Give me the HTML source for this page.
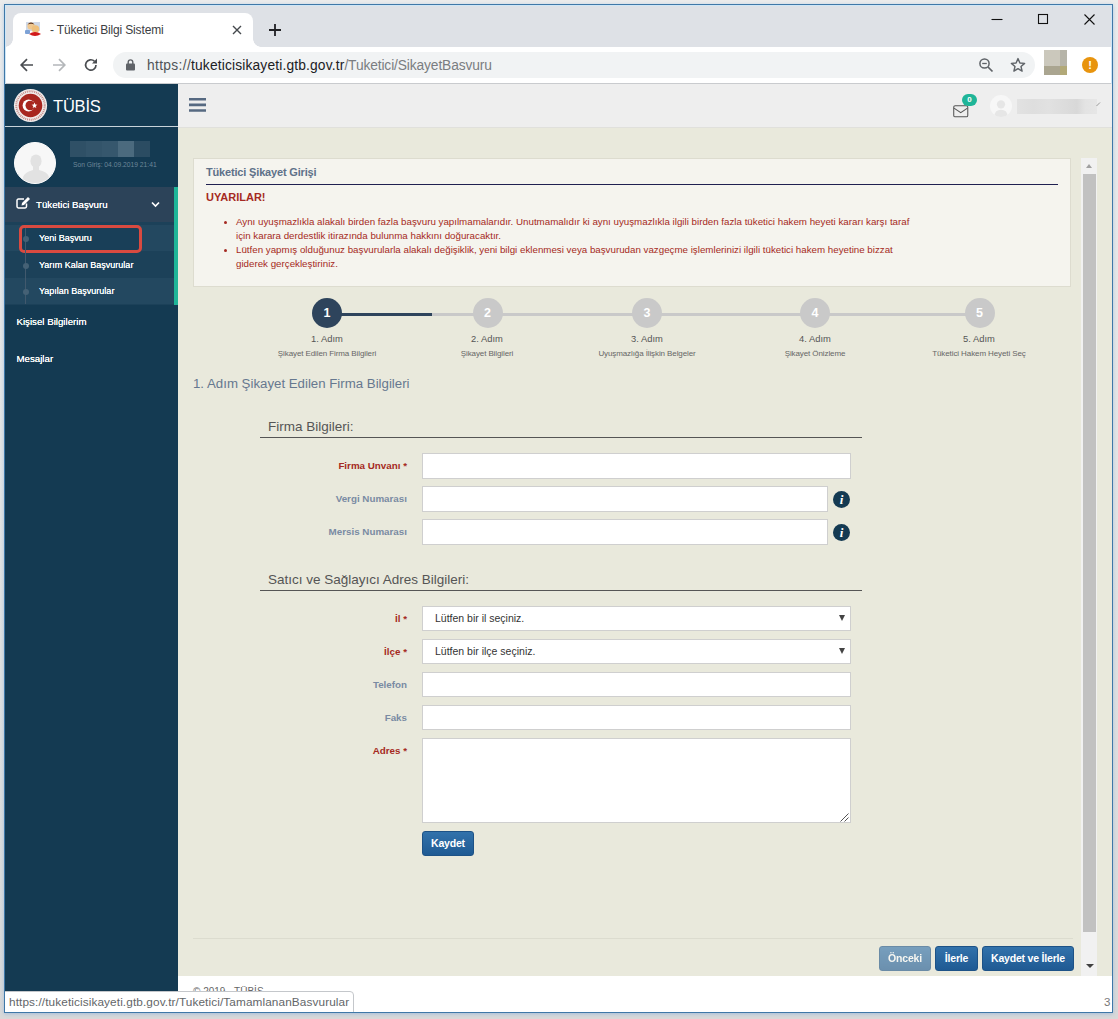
<!DOCTYPE html>
<html lang="tr"><head><meta charset="utf-8"><title>Tüketici Bilgi Sistemi</title>
<style>
*{box-sizing:border-box;margin:0;padding:0}
html,body{width:1118px;height:1019px;overflow:hidden}
body{font-family:"Liberation Sans",sans-serif;background:linear-gradient(#ececec,#e4e4e4 50%,#d9d9d9);position:relative}
.abs{position:absolute}
#win{left:4px;top:4px;width:1109px;height:1009px;border:1px solid #3f78a8;background:#fff;overflow:hidden;box-shadow:0 1px 4px 0 rgba(120,165,215,.55)}
/* all children positioned relative to page => offset -5 */
#in{left:-5px;top:-5px;width:1118px;height:1019px}
#tabstrip{left:5px;top:5px;width:1107px;height:42px;background:#dee1e6}
#tab{left:13px;top:13px;width:240px;height:34px;background:#fff;border-radius:8px 8px 0 0}
#tabtitle{left:50px;top:23px;font-size:12px;color:#3c4043;letter-spacing:-.15px}
#toolbar{left:5px;top:47px;width:1107px;height:37px;background:#fff;border-bottom:1px solid #c9cbce}
#omni{left:113px;top:52px;width:922px;height:26px;border-radius:13px;background:#f1f3f4}
#url{left:147px;top:58px;font-size:13.8px;color:#202124;letter-spacing:.15px}
#url span{color:#7a7d81;letter-spacing:-.13px}#url span.h{color:#505357;letter-spacing:.33px}
#side{left:5px;top:84px;width:173px;height:928px;background:#143a52}
#apphead{left:178px;top:84px;width:934px;height:44px;background:#eeeeee;border-bottom:1px solid #e0e0dc}
#content{left:178px;top:128px;width:934px;height:848px;background:#e9e9dc}
#footer{left:178px;top:976px;width:934px;height:36px;background:#fff}

.ic{position:absolute;overflow:visible}
#tubis{left:53px;top:97px;font-size:16.5px;color:#fff;letter-spacing:-.2px}
#sideline{left:5px;top:126px;width:173px;height:1px;background:#c8d3da}
#avatar{left:14px;top:142px;width:42px;height:42px;border-radius:50%;background:#f7f7f7;overflow:hidden;border:1px solid #fff}
#blurname{left:70px;top:141px;width:80px;height:16px;background:linear-gradient(90deg,#2f5066 0 20%,#33546a 20% 40%,#36576d 40% 60%,#4b6a7e 60% 80%,#2b4c62 80%);filter:blur(.5px)}
#songiris{left:73px;top:161px;font-size:6.73px;color:#6c8799;white-space:nowrap}
#mTop{left:5px;top:187px;width:173px;height:35px;background:#2c4359}
#mGreen{left:174px;top:187px;width:4px;height:118px;background:#1fb598}
#mSub{left:5px;top:222px;width:169px;height:83px;background:#1c4159}
.subrow{left:5px;width:169px;height:26px;background:#234860}
#mTopTxt{left:36px;top:199px;font-size:9.7px;color:#fff;font-weight:normal;text-shadow:0 0 .4px #fff}
.sub{font-size:9px;color:#fff;left:39px;white-space:nowrap;text-shadow:0 0 .3px #fff}
.mi{font-size:9.7px;color:#fff;left:16.5px;white-space:nowrap;text-shadow:0 0 .3px #fff}
#vline{left:25px;top:228px;width:1px;height:76px;background:#41596d}
.dot{width:6px;height:6px;border-radius:50%;background:#456175;left:22.5px}
#redbox{left:18.5px;top:224.5px;width:123px;height:28px;border:3px solid #d94a40;border-radius:5px;background:#193f58}

#panel{left:193px;top:158px;width:878px;height:129px;background:#f5f4ee;border:1px solid #dddccf}
#ptitle{left:206px;top:166px;font-size:11px;font-weight:bold;color:#5e7189;letter-spacing:-.17px}
#pline{left:206px;top:184px;width:852px;height:1px;background:#1f2050}
#uyari{left:206px;top:191px;font-size:11px;font-weight:bold;color:#a52a22}
.wl{font-size:9.76px;color:#a52a22;left:236px;white-space:nowrap}
.bul{width:3px;height:3px;border-radius:50%;background:#a52a22;left:224px}
#sbar{left:1081px;top:158px;width:16px;height:818px;background:#f1f1f1}
#sthumb{left:1083px;top:174px;width:13px;height:758px;background:#c1c1c1}
.stepline{height:3px;top:313px;background:#c9c9c9}
.sc{width:30px;height:30px;border-radius:50%;background:#c9c9c9;color:#fff;font-weight:bold;font-size:12.5px;text-align:center;line-height:30px;top:298px}
.st1{font-size:9.4px;color:#555;text-align:center;width:120px;top:333px}
.st2{font-size:8px;color:#666;text-align:center;width:140px;top:348.5px;letter-spacing:-.1px}
#h1{left:193px;top:376px;font-size:13.25px;color:#66788f}
.sec{font-size:13.5px;color:#555;left:268px}
.secline{left:260px;width:602px;height:1px;background:#555}
.lbl{font-size:9.8px;font-weight:bold;color:#7a8ba3;text-align:right;width:149px;left:258px;margin-top:-1px;white-space:nowrap}
.lbl.req{color:#a52a22}
.inp{left:422px;width:429px;height:26px;background:#fff;border:1px solid #cfcfcf}
.selt{font-size:10.5px;color:#333;left:435px}
.arr{width:0;height:0;border-left:3.5px solid transparent;border-right:3.5px solid transparent;border-top:6px solid #444;left:839px}
.info{width:17px;height:17px;border-radius:50%;background:#143a52;left:833px;color:#fff;font-family:"Liberation Serif",serif;font-style:italic;font-weight:bold;font-size:13px;text-align:center;line-height:17px}
.btn{height:25px;border-radius:3px;background:linear-gradient(#3272ab,#1f5a93);border:1px solid #1d5286;color:#fff;font-weight:bold;font-size:10.5px;text-align:center;line-height:23px;white-space:nowrap;letter-spacing:-.2px}
#hr{left:193px;top:938px;width:880px;height:1px;background:#dcdccf}
#foottxt{left:193px;top:986px;font-size:10px;color:#666}
#status{left:4px;top:991px;width:350px;height:22px;background:#fff;border:1px solid #c4c7cb;border-radius:0 4px 0 0;font-size:11.8px;color:#636669;line-height:20px;padding-left:4px;white-space:nowrap;letter-spacing:.1px}
#three{left:1104px;top:996px;font-size:11.5px;color:#777}

#tab:before,#tab:after{content:"";position:absolute;bottom:0;width:8px;height:8px}
#tab:before{left:-8px;background:radial-gradient(circle at 0 0,rgba(255,255,255,0) 7.5px,#fff 8px)}
#tab:after{right:-8px;background:radial-gradient(circle at 100% 0,rgba(255,255,255,0) 7.5px,#fff 8px)}
#glow{left:5px;top:5px;width:1107px;height:79px;border:1px solid #cfe6f6;border-bottom:0;pointer-events:none}
</style></head><body>
<div id="win" class="abs"><div id="in" class="abs">
<div id="tabstrip" class="abs"></div>
<div id="tab" class="abs"></div>
<div id="tabtitle" class="abs">- Tüketici Bilgi Sistemi</div>
<div id="toolbar" class="abs"></div>
<div id="omni" class="abs"></div>
<div id="url" class="abs"><span class="h">https://</span>tuketicisikayeti.gtb.gov.tr<span>/Tuketici/SikayetBasvuru</span></div>
<div id="side" class="abs"></div>
<div id="apphead" class="abs"></div>
<div id="content" class="abs"></div>
<div id="footer" class="abs"></div>

<!-- chrome tab bar icons -->
<svg class="ic" style="left:25px;top:21px" width="17" height="17" viewBox="0 0 17 17"><rect x="1" y="1" width="14" height="9" fill="#cfd8e6"/><circle cx="6" cy="5" r="3.6" fill="#f0c890"/><path d="M2.5 3.5Q6 -0.5 9.5 3.5Q6 2 2.5 3.5Z" fill="#5a3420"/><circle cx="10.5" cy="8" r="3.8" fill="#eec07c"/><path d="M4 13Q10 9 16 13Q10 17 4 13Z" fill="#d11a1a"/><rect x="0" y="9" width="5" height="4" rx="1" fill="#7da2d6"/></svg>
<svg class="ic" style="left:232px;top:25px" width="10" height="10" viewBox="0 0 10 10"><path d="M1 1L9 9M9 1L1 9" stroke="#45494d" stroke-width="1.4" fill="none"/></svg>
<svg class="ic" style="left:269px;top:24px" width="12" height="12" viewBox="0 0 12 12"><path d="M6 0V12M0 6H12" stroke="#202124" stroke-width="1.8" fill="none"/></svg>
<!-- window controls -->
<svg class="ic" style="left:991px;top:14px" width="12" height="12" viewBox="0 0 12 12"><path d="M0.5 5.5H11.5" stroke="#111" stroke-width="1.1"/></svg>
<svg class="ic" style="left:1038px;top:14px" width="11" height="11" viewBox="0 0 11 11"><rect x="0.5" y="0.5" width="9" height="9" fill="none" stroke="#111" stroke-width="1.1"/></svg>
<svg class="ic" style="left:1084px;top:14px" width="11" height="11" viewBox="0 0 11 11"><path d="M0.5 0.5L10.5 10.5M10.5 0.5L0.5 10.5" stroke="#111" stroke-width="1.1" fill="none"/></svg>
<!-- nav icons -->
<svg class="ic" style="left:20px;top:58px" width="14" height="14" viewBox="0 0 14 14"><path d="M13 7H1.5M7 1.2L1.2 7L7 12.8" stroke="#4a4d51" stroke-width="1.7" fill="none"/></svg>
<svg class="ic" style="left:52px;top:58px" width="14" height="14" viewBox="0 0 14 14"><path d="M1 7H12.5M7 1.2L12.8 7L7 12.8" stroke="#b4b7ba" stroke-width="1.7" fill="none"/></svg>
<svg class="ic" style="left:84px;top:58px" width="14" height="14" viewBox="0 0 14 14"><path d="M12 7A5.2 5.2 0 1 1 10.4 3.2" stroke="#4a4d51" stroke-width="1.7" fill="none"/><path d="M13 0.5V5.5H8Z" fill="#4a4d51"/></svg>
<svg class="ic" style="left:126px;top:59px" width="9" height="12" viewBox="0 0 9 12"><rect x="0" y="4.5" width="9" height="7" rx="1" fill="#5f6368"/><path d="M2.2 5V3.2A2.3 2.3 0 0 1 6.8 3.2V5" stroke="#5f6368" stroke-width="1.4" fill="none"/></svg>
<svg class="ic" style="left:978px;top:57px" width="16" height="16" viewBox="0 0 16 16"><circle cx="6.5" cy="6.5" r="4.6" stroke="#5f6368" stroke-width="1.5" fill="none"/><path d="M10 10L14.5 14.5" stroke="#5f6368" stroke-width="1.7"/><path d="M4.2 6.5H8.8" stroke="#5f6368" stroke-width="1.3"/></svg>
<svg class="ic" style="left:1010px;top:57px" width="16" height="16" viewBox="0 0 16 16"><path d="M8 1.6L9.9 6L14.6 6.4L11 9.5L12.1 14.1L8 11.6L3.9 14.1L5 9.5L1.4 6.4L6.1 6Z" stroke="#5f6368" stroke-width="1.4" fill="none" stroke-linejoin="round"/></svg>
<div class="abs" style="left:1044px;top:50px;width:23px;height:24.5px;background:#cbc8bc"></div>
<div class="abs" style="left:1060px;top:50px;width:7px;height:16px;background:#b6b4a8"></div>
<div class="abs" style="left:1044px;top:66px;width:23px;height:8.5px;background:#aaa590"></div>
<div class="abs" style="left:1060px;top:66px;width:7px;height:8.5px;background:#b2a978"></div>
<div class="abs" style="left:1082px;top:57px;width:16px;height:16px;border-radius:50%;background:#e8940e;color:#fff;font-weight:bold;font-size:11px;text-align:center;line-height:16px">!</div>
<!-- sidebar -->
<svg class="ic" style="left:13px;top:88px" width="35" height="35" viewBox="0 0 35 35"><circle cx="17.5" cy="17.5" r="16.6" fill="#f1eceb"/><circle cx="17.5" cy="17.5" r="14.2" fill="none" stroke="#c58a86" stroke-width="2" stroke-dasharray="1 .9"/><circle cx="17.5" cy="17.5" r="11.8" fill="#a8261f"/><circle cx="15.6" cy="17.5" r="6" fill="#fff"/><circle cx="17.3" cy="17.5" r="4.8" fill="#a8261f"/><path d="M21.5 14.6l.8 2 2.1.1-1.7 1.3.6 2.1-1.8-1.2-1.8 1.2.6-2.1-1.7-1.3 2.1-.1z" fill="#fff"/></svg>
<div id="tubis" class="abs">TÜBİS</div>
<div id="sideline" class="abs"></div>
<div id="avatar" class="abs"><svg width="40" height="40" viewBox="0 0 40 40"><ellipse cx="21" cy="18" rx="5.6" ry="6.6" fill="#e2e2e2"/><path d="M18 22H24V27Q33 29 34 34L32 40H9L8 34Q10 29 18 27Z" fill="#e2e2e2"/></svg></div>
<div id="blurname" class="abs"></div>
<div id="songiris" class="abs">Son Giriş: 04.09.2019 21:41</div>
<div id="mTop" class="abs"></div>
<div id="mSub" class="abs"></div>
<div class="abs subrow" style="top:225px"></div>
<div class="abs subrow" style="top:278px"></div>
<div id="mGreen" class="abs"></div>
<div id="redbox" class="abs"></div>
<div id="vline" class="abs"></div>
<div class="abs dot" style="top:236px"></div><div class="abs dot" style="top:263px"></div><div class="abs dot" style="top:289px"></div>
<svg class="ic" style="left:16px;top:196px" width="15" height="13" viewBox="0 0 15 13"><path d="M10.5 7.5V10.6A1.4 1.4 0 0 1 9.1 12H2.4A1.4 1.4 0 0 1 1 10.600V4.4A1.400 1.400 0 0 1 2.400 3H8" stroke="#fff" stroke-width="1.5" fill="none"/><path d="M5.500 9.500L6 7L12 1L14 3L8 9Z" fill="#fff"/></svg>
<div id="mTopTxt" class="abs">Tüketici Başvuru</div>
<svg class="ic" style="left:151px;top:201px" width="9" height="7" viewBox="0 0 9 7"><path d="M1 1.500L4.500 5L8 1.500" stroke="#fff" stroke-width="1.700" fill="none"/></svg>
<div class="abs sub" style="top:233px">Yeni Başvuru</div>
<div class="abs sub" style="top:260px">Yarım Kalan Başvurular</div>
<div class="abs sub" style="top:286px">Yapılan Başvurular</div>
<div class="abs mi" style="top:316px">Kişisel Bilgilerim</div>
<div class="abs mi" style="top:353px">Mesajlar</div>

<!-- app header -->
<svg class="ic" style="left:189px;top:97px" width="18" height="15" viewBox="0 0 18 15"><path d="M0 2.300H17M0 7.900H17M0 13.500H17" stroke="#566981" stroke-width="2.600"/></svg>
<svg class="ic" style="left:952.5px;top:104.7px" width="15.5" height="12.5" viewBox="0 0 16 13"><rect x="0.700" y="0.700" width="14.600" height="11.600" rx="1.500" fill="none" stroke="#555" stroke-width="1.100"/><path d="M1 3.200L8 8L15 3.200" stroke="#555" stroke-width="1.100" fill="none"/></svg>
<div class="abs" style="left:962px;top:94px;width:15px;height:12px;border-radius:6px;background:#1fb598;color:#fff;font-size:8px;font-weight:bold;text-align:center;line-height:12px">0</div>
<div class="abs" style="left:990px;top:95px;width:22px;height:22px;border-radius:50%;background:#f7f7f7;overflow:hidden"><svg width="22" height="22" viewBox="0 0 40 40"><circle cx="20" cy="17" r="7.5" fill="#e6e6e6"/><path d="M8 40Q8 27 20 27Q32 27 32 40Z" fill="#e6e6e6"/></svg></div>
<div class="abs" style="left:1017px;top:99px;width:80px;height:15px;background:linear-gradient(90deg,#e2e2e2,#dedede 20%,#e1e1e1 40%,#dcdcdc 60%,#d8d8d8 75%,#e3e3e3 85%,#e6e6e6);filter:blur(.6px)"></div>
<svg class="ic" style="left:1096px;top:102px" width="5" height="5" viewBox="0 0 5 5"><path d="M0.500 4L4 0.500" stroke="#999" stroke-width="1"/></svg>
<!-- panel -->
<div id="panel" class="abs"></div>
<div id="ptitle" class="abs">Tüketici Şikayet Girişi</div>
<div id="pline" class="abs"></div>
<div id="uyari" class="abs">UYARILAR!</div>
<div class="abs bul" style="top:220.5px"></div><div class="abs bul" style="top:248.5px"></div>
<div class="abs wl" style="top:216px">Aynı uyuşmazlıkla alakalı birden fazla başvuru yapılmamalarıdır. Unutmamalıdır ki aynı uyuşmazlıkla ilgili birden fazla tüketici hakem heyeti kararı karşı taraf</div>
<div class="abs wl" style="top:230px">için karara derdestlik itirazında bulunma hakkını doğuracaktır.</div>
<div class="abs wl" style="top:244px">Lütfen yapmış olduğunuz başvurularla alakalı değişiklik, yeni bilgi eklenmesi veya başvurudan vazgeçme işlemlerinizi ilgili tüketici hakem heyetine bizzat</div>
<div class="abs wl" style="top:258px">giderek gerçekleştiriniz.</div>
<div id="sbar" class="abs"></div><div id="sthumb" class="abs"></div>
<div class="abs" style="left:1086px;top:164px;width:0;height:0;border-left:3.500px solid transparent;border-right:3.500px solid transparent;border-bottom:4px solid #a0a0a0"></div>
<div class="abs" style="left:1085.5px;top:963.5px;width:0;height:0;border-left:4px solid transparent;border-right:4px solid transparent;border-top:4.5px solid #404040"></div>
<!-- steps -->
<div class="abs stepline" style="left:327px;width:652px"></div>
<div class="abs stepline" style="left:327px;width:105px;background:#2e445c"></div>
<div class="abs sc" style="left:312px;background:#2e445c">1</div>
<div class="abs sc" style="left:472.5px">2</div>
<div class="abs sc" style="left:632px">3</div>
<div class="abs sc" style="left:800px">4</div>
<div class="abs sc" style="left:964.5px">5</div>
<div class="abs st1" style="left:267px">1. Adım</div><div class="abs st2" style="left:257px">Şikayet Edilen Firma Bilgileri</div>
<div class="abs st1" style="left:427px">2. Adım</div><div class="abs st2" style="left:417px">Şikayet Bilgileri</div>
<div class="abs st1" style="left:587px">3. Adım</div><div class="abs st2" style="left:577px">Uyuşmazlığa İlişkin Belgeler</div>
<div class="abs st1" style="left:755px">4. Adım</div><div class="abs st2" style="left:745px">Şikayet Önizleme</div>
<div class="abs st1" style="left:919px">5. Adım</div><div class="abs st2" style="left:909px">Tüketici Hakem Heyeti Seç</div>
<div id="h1" class="abs">1. Adım Şikayet Edilen Firma Bilgileri</div>
<!-- form -->
<div class="abs sec" style="top:419px">Firma Bilgileri:</div><div class="abs secline" style="top:437px"></div>
<div class="abs lbl req" style="top:461px">Firma Unvanı *</div><div class="abs inp" style="top:453px"></div>
<div class="abs lbl" style="top:494px">Vergi Numarası</div><div class="abs inp" style="top:486px;width:406px"></div><div class="abs info" style="top:490.5px">i</div>
<div class="abs lbl" style="top:527px">Mersis Numarası</div><div class="abs inp" style="top:519px;width:406px"></div><div class="abs info" style="top:523.5px">i</div>
<div class="abs sec" style="top:572px">Satıcı ve Sağlayıcı Adres Bilgileri:</div><div class="abs secline" style="top:590px"></div>
<div class="abs lbl req" style="top:614px">İl *</div><div class="abs inp" style="top:606px;height:25px"></div><div class="abs selt" style="top:612px">Lütfen bir il seçiniz.</div><div class="abs arr" style="top:615px"></div>
<div class="abs lbl req" style="top:647px">İlçe *</div><div class="abs inp" style="top:639px;height:25px"></div><div class="abs selt" style="top:645px">Lütfen bir ilçe seçiniz.</div><div class="abs arr" style="top:648px"></div>
<div class="abs lbl" style="top:680px">Telefon</div><div class="abs inp" style="top:672px;height:25px"></div>
<div class="abs lbl" style="top:713px">Faks</div><div class="abs inp" style="top:705px;height:25px"></div>
<div class="abs lbl req" style="top:746px">Adres *</div><div class="abs inp" style="top:738px;height:85px"></div>
<svg class="ic" style="left:840px;top:813px" width="9" height="9" viewBox="0 0 9 9"><path d="M0.500 8.500L8.500 0.500M4.500 8.500L8.500 4.500" stroke="#555" stroke-width="1"/></svg>
<div class="abs btn" style="left:422px;top:831px;width:52px">Kaydet</div>
<div id="hr" class="abs"></div>
<div class="abs btn" style="left:879px;top:946px;width:52px;opacity:.62">Önceki</div>
<div class="abs btn" style="left:935px;top:946px;width:43px">İlerle</div>
<div class="abs btn" style="left:982px;top:946px;width:92px">Kaydet ve İlerle</div>
<div id="foottxt" class="abs">© 2019 - TÜBİS</div>
<div id="status" class="abs">https://tuketicisikayeti.gtb.gov.tr/Tuketici/TamamlananBasvurular</div>
<div id="three" class="abs">3</div>
<div id="glow" class="abs"></div>
<!--MORE-->
</div></div>
</body></html>
